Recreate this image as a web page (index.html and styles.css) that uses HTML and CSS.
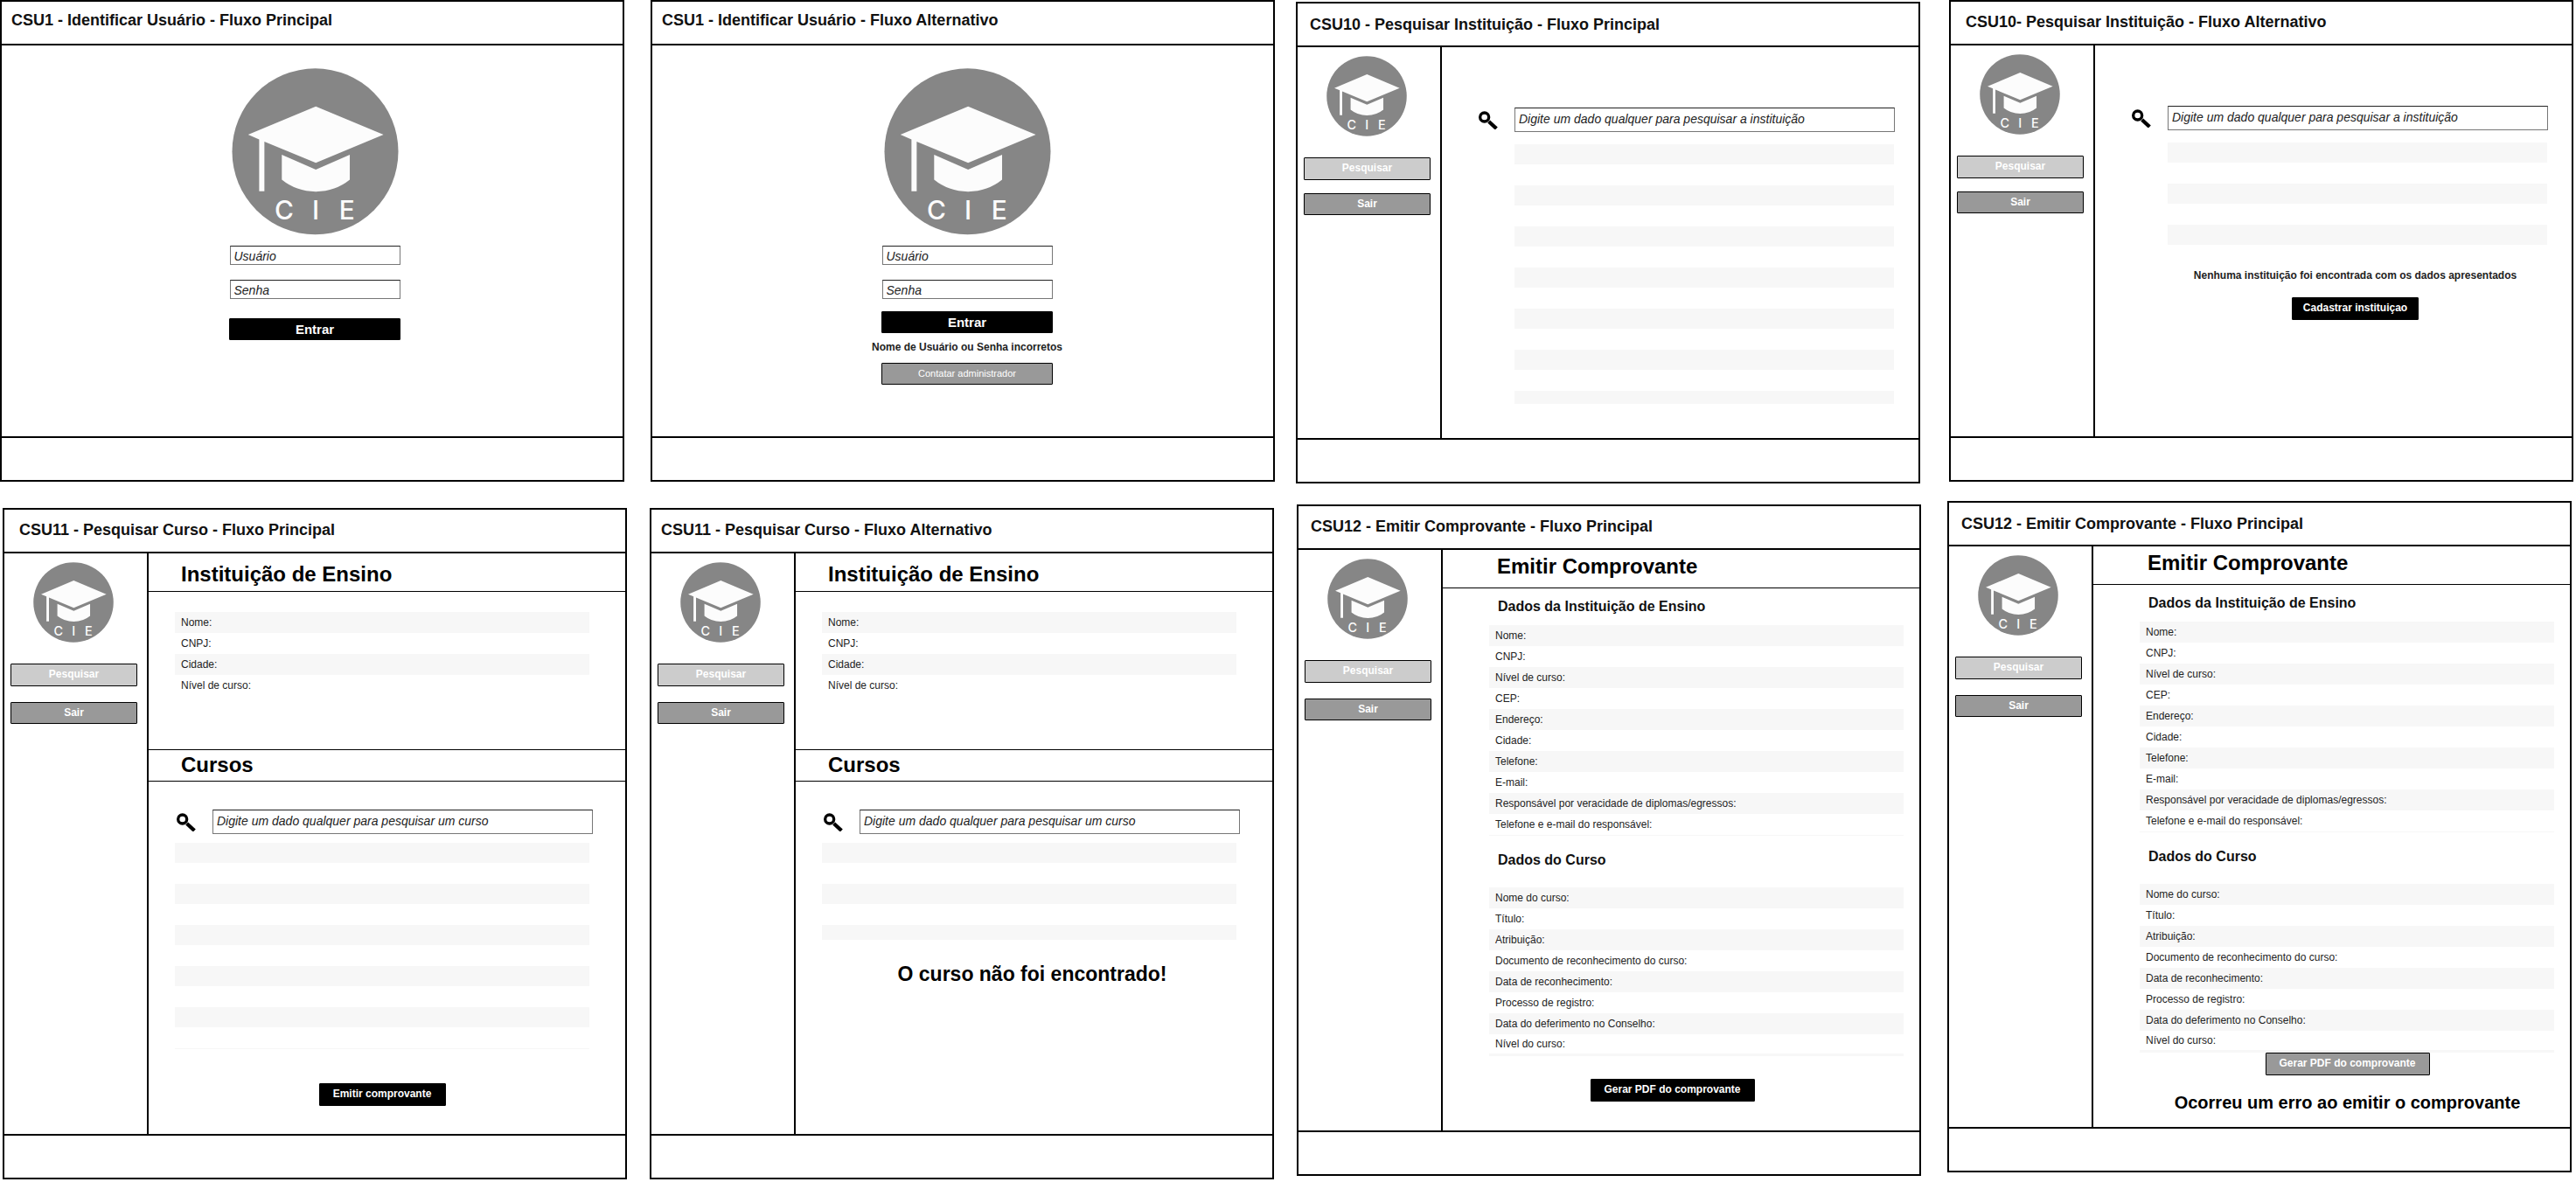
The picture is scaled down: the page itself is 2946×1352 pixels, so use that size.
FILE: index.html
```html
<!DOCTYPE html>
<html lang="pt-BR">
<head>
<meta charset="utf-8">
<meta name="viewport" content="width=device-width, initial-scale=1">
<title>CIE - Protótipos de tela</title>
<link rel="stylesheet" href="styles.css">
</head>
<body>
<svg class="sprite" aria-hidden="true">
  <defs>
    <g id="cap">
      <circle cx="322" cy="312" r="286" fill="#868686"/>
      <path d="M324 157 557 254 324 351 147 278V449H129V270L91 254Z" fill="#fcfcfc"/>
      <path d="M207 323 324 374 441 323V409Q392 449 324 450 256 449 207 409Z" fill="#fcfcfc"/>
    </g>
    <g id="search">
      <circle cx="669" cy="246" r="15" fill="none" stroke="#000" stroke-width="10"/>
      <path d="M684 261 710 285" fill="none" stroke="#000" stroke-width="13"/>
    </g>
  </defs>
</svg>

<div class="board board-top">
  <section class="screen">
    <header class="screen-header lifted"><h2>CSU1 - Identificar Usuário - Fluxo Principal</h2></header>
    <form class="screen-body login">
      <svg class="logo-large" viewBox="36 25 572 575"><use href="#cap"/><text class="logo-text" y="547"><tspan x="215">C</tspan><tspan x="324">I</tspan><tspan x="431">E</tspan></text></svg>
      <input class="field" type="text" placeholder="Usuário" aria-label="Usuário">
      <input class="field" type="password" placeholder="Senha" aria-label="Senha">
      <button class="btn btn-black btn-login spaced" type="button">Entrar</button>
    </form>
    <footer class="screen-footer"></footer>
  </section>

  <section class="screen gap-30">
    <header class="screen-header lifted"><h2>CSU1 - Identificar Usuário - Fluxo Alternativo</h2></header>
    <form class="screen-body login login-error">
      <svg class="logo-large" viewBox="36 25 572 575"><use href="#cap"/><text class="logo-text" y="547"><tspan x="215">C</tspan><tspan x="324">I</tspan><tspan x="431">E</tspan></text></svg>
      <input class="field" type="text" placeholder="Usuário" aria-label="Usuário">
      <input class="field" type="password" placeholder="Senha" aria-label="Senha">
      <button class="btn btn-black btn-login" type="button">Entrar</button>
      <p class="note">Nome de Usuário ou Senha incorretos</p>
      <button class="btn btn-gray btn-contact" type="button">Contatar administrador</button>
    </form>
    <footer class="screen-footer"></footer>
  </section>

  <section class="screen gap-24 drop-2">
    <header class="screen-header indent"><h2>CSU10 - Pesquisar Instituição - Fluxo Principal</h2></header>
    <div class="screen-body split">
      <nav class="sidebar">
        <svg class="logo-small" viewBox="36 25 572 575"><use href="#cap"/><text class="logo-text" y="547"><tspan x="215">C</tspan><tspan x="324">I</tspan><tspan x="431">E</tspan></text></svg>
        <button class="btn btn-light" type="button">Pesquisar</button>
        <button class="btn btn-gray" type="button">Sair</button>
      </nav>
      <main class="content">
        <div class="search search-top">
          <label for="q3" aria-label="Pesquisar"><svg class="search-icon" viewBox="649 225 66 63"><use href="#search"/></svg></label>
          <input class="field" id="q3" type="text" placeholder="Digite um dado qualquer para pesquisar a instituição">
        </div>
        <ul class="results results-top cut-15">
          <li></li><li></li><li></li><li></li><li></li><li></li><li></li>
        </ul>
      </main>
    </div>
    <footer class="screen-footer"></footer>
  </section>

  <section class="screen gap-33">
    <header class="screen-header lifted-slightly indent-more"><h2>CSU10- Pesquisar Instituição - Fluxo Alternativo</h2></header>
    <div class="screen-body split">
      <nav class="sidebar">
        <svg class="logo-small" viewBox="36 25 572 575"><use href="#cap"/><text class="logo-text" y="547"><tspan x="215">C</tspan><tspan x="324">I</tspan><tspan x="431">E</tspan></text></svg>
        <button class="btn btn-light" type="button">Pesquisar</button>
        <button class="btn btn-gray" type="button">Sair</button>
      </nav>
      <main class="content">
        <div class="search search-top">
          <label for="q4" aria-label="Pesquisar"><svg class="search-icon" viewBox="649 225 66 63"><use href="#search"/></svg></label>
          <input class="field" id="q4" type="text" placeholder="Digite um dado qualquer para pesquisar a instituição">
        </div>
        <ul class="results results-top">
          <li></li><li></li><li></li>
        </ul>
        <div class="empty">
          <p class="note">Nenhuma instituição foi encontrada com os dados apresentados</p>
          <button class="btn btn-black" type="button">Cadastrar instituiçao</button>
        </div>
      </main>
    </div>
    <footer class="screen-footer"></footer>
  </section>
</div>

<div class="board board-bottom">
  <section class="screen drop-8">
    <header class="screen-header lifted-slightly indent-more"><h2>CSU11 - Pesquisar Curso - Fluxo Principal</h2></header>
    <div class="screen-body split">
      <nav class="sidebar">
        <svg class="logo-small" viewBox="36 25 572 575"><use href="#cap"/><text class="logo-text" y="547"><tspan x="215">C</tspan><tspan x="324">I</tspan><tspan x="431">E</tspan></text></svg>
        <button class="btn btn-light" type="button">Pesquisar</button>
        <button class="btn btn-gray" type="button">Sair</button>
      </nav>
      <main class="content">
        <h3 class="heading heading-institution">Instituição de Ensino</h3>
        <table class="data data-institution">
          <tr><th scope="row">Nome:</th></tr>
          <tr><th scope="row">CNPJ:</th></tr>
          <tr><th scope="row">Cidade:</th></tr>
          <tr><th scope="row">Nível de curso:</th></tr>
        </table>
        <h3 class="heading heading-courses">Cursos</h3>
        <div class="search search-course">
          <label for="q5" aria-label="Pesquisar"><svg class="search-icon" viewBox="649 225 66 63"><use href="#search"/></svg></label>
          <input class="field" id="q5" type="text" placeholder="Digite um dado qualquer para pesquisar um curso">
        </div>
        <ul class="results results-course cut-1">
          <li></li><li></li><li></li><li></li><li></li><li></li>
        </ul>
        <div class="action action-issue">
          <button class="btn btn-black" type="button">Emitir comprovante</button>
        </div>
      </main>
    </div>
    <footer class="screen-footer"></footer>
  </section>

  <section class="screen gap-26 drop-8">
    <header class="screen-header lifted-slightly"><h2>CSU11 - Pesquisar Curso - Fluxo Alternativo</h2></header>
    <div class="screen-body split">
      <nav class="sidebar">
        <svg class="logo-small" viewBox="36 25 572 575"><use href="#cap"/><text class="logo-text" y="547"><tspan x="215">C</tspan><tspan x="324">I</tspan><tspan x="431">E</tspan></text></svg>
        <button class="btn btn-light" type="button">Pesquisar</button>
        <button class="btn btn-gray" type="button">Sair</button>
      </nav>
      <main class="content">
        <h3 class="heading heading-institution">Instituição de Ensino</h3>
        <table class="data data-institution">
          <tr><th scope="row">Nome:</th></tr>
          <tr><th scope="row">CNPJ:</th></tr>
          <tr><th scope="row">Cidade:</th></tr>
          <tr><th scope="row">Nível de curso:</th></tr>
        </table>
        <h3 class="heading heading-courses">Cursos</h3>
        <div class="search search-course">
          <label for="q6" aria-label="Pesquisar"><svg class="search-icon" viewBox="649 225 66 63"><use href="#search"/></svg></label>
          <input class="field" id="q6" type="text" placeholder="Digite um dado qualquer para pesquisar um curso">
        </div>
        <ul class="results results-course cut-17">
          <li></li><li></li><li></li>
        </ul>
        <p class="alert alert-course">O curso não foi encontrado!</p>
      </main>
    </div>
    <footer class="screen-footer"></footer>
  </section>

  <section class="screen gap-26 drop-4">
    <header class="screen-header lifted-slightly indent"><h2>CSU12 - Emitir Comprovante - Fluxo Principal</h2></header>
    <div class="screen-body split">
      <nav class="sidebar">
        <svg class="logo-small" viewBox="36 25 572 575"><use href="#cap"/><text class="logo-text" y="547"><tspan x="215">C</tspan><tspan x="324">I</tspan><tspan x="431">E</tspan></text></svg>
        <button class="btn btn-light" type="button">Pesquisar</button>
        <button class="btn btn-gray" type="button">Sair</button>
      </nav>
      <main class="content">
        <h3 class="heading heading-receipt">Emitir Comprovante</h3>
        <h4 class="subheading">Dados da Instituição de Ensino</h4>
        <table class="data data-receipt">
          <tr><th scope="row">Nome:</th></tr>
          <tr><th scope="row">CNPJ:</th></tr>
          <tr><th scope="row">Nível de curso:</th></tr>
          <tr><th scope="row">CEP:</th></tr>
          <tr><th scope="row">Endereço:</th></tr>
          <tr><th scope="row">Cidade:</th></tr>
          <tr><th scope="row">Telefone:</th></tr>
          <tr><th scope="row">E-mail:</th></tr>
          <tr><th scope="row">Responsável por veracidade de diplomas/egressos:</th></tr>
          <tr><th scope="row">Telefone e e-mail do responsável:</th></tr>
        </table>
        <h4 class="subheading subheading-course">Dados do Curso</h4>
        <table class="data data-receipt data-last">
          <tr><th scope="row">Nome do curso:</th></tr>
          <tr><th scope="row">Título:</th></tr>
          <tr><th scope="row">Atribuição:</th></tr>
          <tr><th scope="row">Documento de reconhecimento do curso:</th></tr>
          <tr><th scope="row">Data de reconhecimento:</th></tr>
          <tr><th scope="row">Processo de registro:</th></tr>
          <tr><th scope="row">Data do deferimento no Conselho:</th></tr>
          <tr><th scope="row">Nível do curso:</th></tr>
        </table>
        <div class="action action-pdf">
          <button class="btn btn-black btn-pdf" type="button">Gerar PDF do comprovante</button>
        </div>
      </main>
    </div>
    <footer class="screen-footer"></footer>
  </section>

  <section class="screen gap-30">
    <header class="screen-header indent"><h2>CSU12 - Emitir Comprovante - Fluxo Principal</h2></header>
    <div class="screen-body split">
      <nav class="sidebar">
        <svg class="logo-small" viewBox="36 25 572 575"><use href="#cap"/><text class="logo-text" y="547"><tspan x="215">C</tspan><tspan x="324">I</tspan><tspan x="431">E</tspan></text></svg>
        <button class="btn btn-light" type="button">Pesquisar</button>
        <button class="btn btn-gray" type="button">Sair</button>
      </nav>
      <main class="content">
        <h3 class="heading heading-receipt">Emitir Comprovante</h3>
        <h4 class="subheading">Dados da Instituição de Ensino</h4>
        <table class="data data-receipt">
          <tr><th scope="row">Nome:</th></tr>
          <tr><th scope="row">CNPJ:</th></tr>
          <tr><th scope="row">Nível de curso:</th></tr>
          <tr><th scope="row">CEP:</th></tr>
          <tr><th scope="row">Endereço:</th></tr>
          <tr><th scope="row">Cidade:</th></tr>
          <tr><th scope="row">Telefone:</th></tr>
          <tr><th scope="row">E-mail:</th></tr>
          <tr><th scope="row">Responsável por veracidade de diplomas/egressos:</th></tr>
          <tr><th scope="row">Telefone e e-mail do responsável:</th></tr>
        </table>
        <h4 class="subheading subheading-course">Dados do Curso</h4>
        <table class="data data-receipt data-last">
          <tr><th scope="row">Nome do curso:</th></tr>
          <tr><th scope="row">Título:</th></tr>
          <tr><th scope="row">Atribuição:</th></tr>
          <tr><th scope="row">Documento de reconhecimento do curso:</th></tr>
          <tr><th scope="row">Data de reconhecimento:</th></tr>
          <tr><th scope="row">Processo de registro:</th></tr>
          <tr><th scope="row">Data do deferimento no Conselho:</th></tr>
          <tr><th scope="row">Nível do curso:</th></tr>
        </table>
        <div class="action action-failed">
          <button class="btn btn-gray btn-pdf" type="button">Gerar PDF do comprovante</button>
          <p class="alert alert-receipt">Ocorreu um erro ao emitir o comprovante</p>
        </div>
      </main>
    </div>
    <footer class="screen-footer"></footer>
  </section>
</div>
</body>
</html>
```
FILE: styles.css
```css
* { box-sizing: border-box; }

body {
  margin: 0;
  background: #fff;
  color: #111;
  font-family: "Liberation Sans", Arial, sans-serif;
  font-size: 12px;
}

h2, h3, h4, p, ul { margin: 0; padding: 0; }
ul { list-style: none; }

.sprite { position: absolute; width: 0; height: 0; }

.logo-text {
  font: 500 90px Inter, sans-serif;
  text-anchor: middle;
  fill: #fcfcfc;
}

/* Board: two rows of four wireframes */
.board { display: flex; align-items: flex-start; }
.board-top { padding: 0 3px 20px 0; }
.board-bottom { padding: 0 5px 0 3px; }

.gap-24 { margin-left: 24px; }
.gap-26 { margin-left: 26px; }
.gap-30 { margin-left: 30px; }
.gap-33 { margin-left: 33px; }
.drop-2 { margin-top: 2px; }
.drop-4 { margin-top: 4px; }
.drop-8 { margin-top: 8px; }

.screen {
  flex: 1 1 0;
  min-width: 0;
  display: flex;
  flex-direction: column;
  border: 2px solid #000;
}

.screen-header {
  display: flex;
  align-items: center;
  min-height: 50px;
  padding-left: 11px;
  border-bottom: 2px solid #000;
}
.screen-header h2 { font-size: 18px; line-height: 22px; }
.lifted { padding-bottom: 6px; }
.lifted-slightly { padding-bottom: 2px; }
.indent { padding-left: 14px; }
.indent-more { padding-left: 17px; }

.board-top .screen-body { min-height: 447px; }
.board-bottom .screen-body { min-height: 664px; }
.split { display: flex; }

.screen-footer { min-height: 50px; border-top: 2px solid #000; }

/* Controls */
.field {
  height: 22px;
  padding: 1px 4px 0;
  border: 1px solid #777;
  border-top-color: #222;
  background: #fff;
  color: #222;
  font: italic 14px/18px "Liberation Sans", Arial, sans-serif;
  outline: none;
}
.field::placeholder { color: #222; opacity: 1; }

.btn {
  width: 145px;
  height: 26px;
  padding: 0 0 2px;
  border: 1px solid #000;
  border-radius: 1px;
  color: #fff;
  font: bold 12px/18px "Liberation Sans", Arial, sans-serif;
}
.btn-black { background: #000; }
.btn-gray { background: #999; }
.btn-light { background: #ccc; }

.note { color: #222; font-weight: bold; line-height: 18px; }

/* Login */
.login {
  display: flex;
  flex-direction: column;
  align-items: center;
  padding: 26px 0 0 6px;
}
.login-error { padding-left: 10px; }
.logo-large { width: 191px; height: 191px; margin-bottom: 12px; }
.login .field { width: 195px; margin-bottom: 17px; }
.login-error .field + .field { margin-bottom: 14px; }
.login .btn { width: 196px; height: 25px; }
.btn-login { font-size: 15px; padding-bottom: 0; }
.spaced { margin-top: 5px; }
.login .note { padding: 7px 0 9px; }
.btn-contact { font-size: 11px; font-weight: normal; }

/* Sidebar */
.sidebar {
  flex: none;
  width: 165px;
  display: flex;
  flex-direction: column;
  align-items: center;
  padding: 10px 11px 0 7px;
  border-right: 2px solid #000;
}
.logo-small { width: 92px; height: 92px; margin: 0 2px 24px 0; }
.sidebar .btn + .btn { height: 25px; margin-top: 15px; }
.board-bottom .sidebar .btn + .btn { margin-top: 18px; }

.content { flex: 1; min-width: 0; }

/* Search */
.search { display: flex; align-items: center; }
.search label { flex: none; margin-right: 19px; }
.search-icon { display: block; width: 22px; height: 21px; }
.search .field { flex: 1; min-width: 0; height: 28px; padding: 0 4px 3px; }
.search-top { padding: 69px 27px 0 42px; }
.search-course { padding: 32px 37px 0 32px; }

.results { display: flex; flex-direction: column; gap: 24px; }
.results li { height: 23px; background: #f7f7f7; }
.results-top { padding: 14px 28px 0 83px; }
.results-course { padding: 10px 41px 0 30px; }
.cut-15 li:last-child { height: 15px; }
.cut-17 li:last-child { height: 17px; }
.cut-1 li:last-child { height: 1px; }

.empty {
  display: flex;
  flex-direction: column;
  align-items: center;
  gap: 16px;
  padding: 26px 33px 0 83px;
}

/* Section headings */
.heading {
  display: flex;
  align-items: center;
  border-bottom: 1px solid #000;
  color: #000;
  font-size: 24px;
  line-height: 28px;
}
.heading-institution { min-height: 44px; padding: 4px 0 0 37px; }
.heading-courses { min-height: 37px; padding: 0 0 2px 37px; border-top: 1px solid #000; }
.heading-receipt { min-height: 44px; padding: 0 0 6px 62px; }

.subheading {
  padding: 11px 0 11px 63px;
  font-size: 16px;
  line-height: 20px;
}
.subheading-course { padding: 18px 0 21px 63px; }

/* Data rows */
.data { width: auto; border-collapse: collapse; }
.data tr:nth-child(odd) { background: #f7f7f7; }
.data th {
  height: 24px;
  padding: 0 7px;
  color: #222;
  font-weight: normal;
  line-height: 20px;
  text-align: left;
}
.data-institution { width: calc(100% - 71px); margin: 23px 41px 61px 30px; }
.data-receipt { width: calc(100% - 71px); margin: 0 18px 0 53px; border-bottom: 1px solid #f7f7f7; }
.data-last { border-bottom-width: 3px; }

.action { display: flex; flex-direction: column; align-items: center; }
.action-issue { padding: 39px 41px 0 30px; }
.action-pdf { padding: 26px 20px 0 0; }
.action-failed { padding: 0 0 0 36px; }
.btn-pdf { width: 188px; }

.alert { color: #000; font-weight: bold; line-height: 28px; }
.alert-course { padding: 25px 4px 0 0; font-size: 23px; text-align: center; }
.alert-receipt { padding-top: 17px; font-size: 20px; }
```
